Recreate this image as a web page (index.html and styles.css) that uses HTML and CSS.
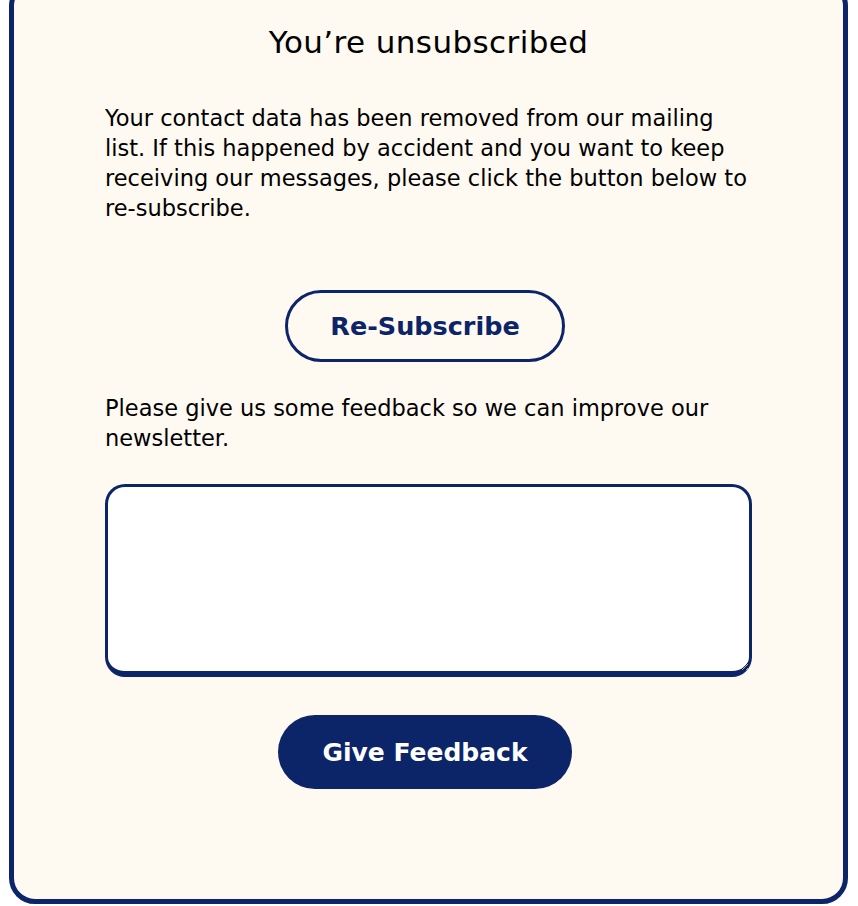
FILE: index.html
```html
<!DOCTYPE html>
<html lang="en">
<head>
<meta charset="utf-8">
<title>Unsubscribed</title>
<link rel="stylesheet" href="styles.css">
</head>
<body>
<div class="page">
  <main class="card">
    <div class="content">
      <h1 class="title">You’re unsubscribed</h1>
      <p class="text intro">Your contact data has been removed from our mailing list. If this happened by accident and you want to keep receiving our messages, please click the button below to re-subscribe.</p>
      <div class="actions resub">
        <button class="btn btn-outline" type="button">Re-Subscribe</button>
      </div>
      <p class="text feedback-label">Please give us some feedback so we can improve our newsletter.</p>
      <textarea class="feedback" aria-label="Feedback"></textarea>
      <div class="actions give">
        <button class="btn btn-solid" type="button">Give Feedback</button>
      </div>
    </div>
  </main>
</div>
</body>
</html>
```
FILE: styles.css
```css
html, body {
  margin: 0;
  padding: 0;
  background: #ffffff;
}
body {
  font-family: "DejaVu Sans", Inter, sans-serif;
  color: #000;
}
.page {
  padding: 0 10px 1px 9px;
  height: 906px;
  box-sizing: border-box;
  overflow: hidden;
}
.card {
  margin-top: -20px;
  background: #fef9f1;
  border: 5px solid #0c2468;
  border-radius: 26px;
  padding: 37px 0 110px;
}
.content {
  width: 647px;
  margin: 0 auto;
}
.title {
  margin: 0;
  font-weight: 400;
  font-size: 31px;
  letter-spacing: 0.4px;
  line-height: 40px;
  text-align: center;
}
.text {
  margin: 0;
  font-size: 22.5px;
  line-height: 30px;
}
.intro {
  margin-top: 41px;
}
.actions {
  display: flex;
  justify-content: center;
  padding-right: 7px;
}
.resub {
  margin-top: 67px;
}
.btn {
  font-family: "DejaVu Sans", Inter, sans-serif;
  font-weight: 700;
  font-size: 25.5px;
  border-radius: 999px;
  cursor: pointer;
  box-sizing: border-box;
  padding: 0;
}
.btn-outline {
  width: 280px;
  height: 72px;
  background: transparent;
  color: #0c2468;
  border: 3px solid #0c2468;
}
.btn-solid {
  width: 294px;
  height: 74px;
  background: #0c2468;
  color: #ffffff;
  border: none;
  font-size: 25px;
}
.feedback-label {
  margin-top: 31px;
}
.feedback {
  display: block;
  margin-top: 31px;
  width: 647px;
  height: 193px;
  box-sizing: border-box;
  border: 3px solid #0c2468;
  border-bottom-width: 6px;
  border-radius: 20px;
  background: #ffffff;
  outline: none;
}
.give {
  margin-top: 38px;
}
```
